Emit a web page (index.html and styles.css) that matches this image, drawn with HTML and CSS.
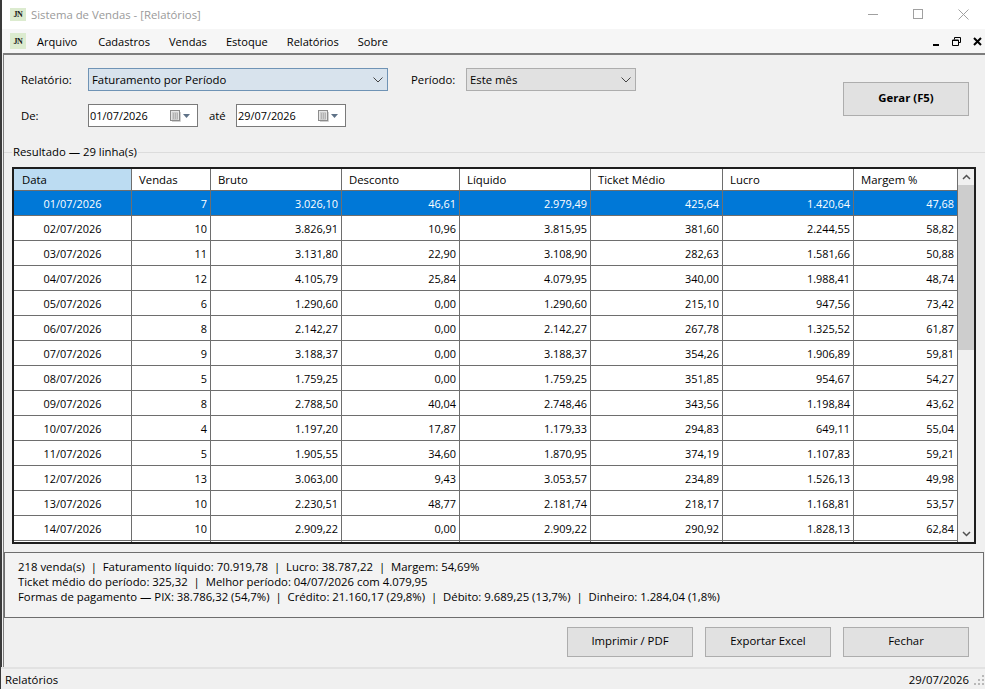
FILE: index.html
```html
<!DOCTYPE html>
<html lang="pt-BR">
<head>
<meta charset="utf-8">
<title>Sistema de Vendas - [Relatórios]</title>
<link rel="stylesheet" href="styles.css">
</head>
<body>
<div class="window">
  <header class="titlebar">
    <span class="appicon short"><span class="appicon-text">JN</span></span>
    <span class="title">Sistema de Vendas - [Relatórios]</span>
    <span class="caption">
      <svg class="cap" width="11" height="11" viewBox="0 0 11 11"><path d="M0 5.500h10" stroke="#a0a0a0" fill="none"/></svg>
      <svg class="cap" width="11" height="11" viewBox="0 0 11 11"><rect x=".5" y=".5" width="9" height="9" stroke="#a0a0a0" fill="none"/></svg>
      <svg class="cap" width="11" height="11" viewBox="0 0 11 11"><path d="M.5.500l10 10M10.500.500l-10 10" stroke="#a0a0a0" fill="none"/></svg>
    </span>
  </header>
  <nav class="menubar">
    <span class="appicon"><span class="appicon-text">JN</span></span>
    <span class="menu">Arquivo</span>
    <span class="menu">Cadastros</span>
    <span class="menu">Vendas</span>
    <span class="menu">Estoque</span>
    <span class="menu">Relatórios</span>
    <span class="menu">Sobre</span>
    <span class="mdi">
      <svg width="7" height="9" viewBox="0 0 7 9"><path d="M0 8h6" stroke="#000" stroke-width="2" fill="none"/></svg>
      <svg width="9" height="9" viewBox="0 0 9 9"><path d="M2.500 2.500V.5h6v5H6.500M.5 3h6v5.500h-6zM.5 3.500h6" stroke="#000" fill="none"/></svg>
      <svg width="9" height="9" viewBox="0 0 9 9"><path d="M1 1l7 7M8 1L1 8" stroke="#000" stroke-width="2" fill="none"/></svg>
    </span>
  </nav>
  <main class="child">
    <section class="filters">
      <div class="fields">
        <div class="field-row">
          <label class="label">Relatório:</label>
          <div class="select focus wide"><span>Faturamento por Período</span><svg class="chev" width="10" height="6" viewBox="0 0 10 6"><path d="M.5.500L5 5 9.500.500" stroke="#444" fill="none"/></svg></div>
          <label class="label period">Período:</label>
          <div class="select plain"><span>Este mês</span><svg class="chev" width="10" height="6" viewBox="0 0 10 6"><path d="M.5.500L5 5 9.500.500" stroke="#444" fill="none"/></svg></div>
        </div>
        <div class="field-row">
          <label class="label">De:</label>
          <div class="date"><span>01/07/2026</span><svg class="cal" width="20" height="12" viewBox="0 0 20 12"><rect x=".5" y=".5" width="9" height="10" fill="#e6e6e6" stroke="#8c8c8c"/><path d="M10.500 2v9.500H2" stroke="#d0d0d0" fill="none"/><path d="M2 3h6M2 5h6M2 7h6M2 9h6M3.500 3v6M5.500 3v6M7.500 3v6" stroke="#b4b4b4" fill="none"/><path d="M13 4h7l-3.500 4z" fill="#5f7287"/></svg></div>
          <span class="ate">até</span>
          <div class="date"><span>29/07/2026</span><svg class="cal" width="20" height="12" viewBox="0 0 20 12"><rect x=".5" y=".5" width="9" height="10" fill="#e6e6e6" stroke="#8c8c8c"/><path d="M10.500 2v9.500H2" stroke="#d0d0d0" fill="none"/><path d="M2 3h6M2 5h6M2 7h6M2 9h6M3.500 3v6M5.500 3v6M7.500 3v6" stroke="#b4b4b4" fill="none"/><path d="M13 4h7l-3.500 4z" fill="#5f7287"/></svg></div>
        </div>
      </div>
      <button class="btn gerar">Gerar (F5)</button>
    </section>
    <section class="group">
      <div class="legend"><span>Resultado — 29 linha(s)</span></div>
      <div class="grid-frame">
        <div class="grid-view">
          <table class="grid">
            <colgroup><col class="c1"><col class="c2"><col class="c3"><col class="c4"><col class="c5"><col class="c6"><col class="c7"><col class="c8"></colgroup>
            <thead><tr><th class="cur">Data</th><th>Vendas</th><th>Bruto</th><th>Desconto</th><th>Líquido</th><th>Ticket Médio</th><th>Lucro</th><th>Margem %</th></tr></thead>
            <tbody>
              <tr class="sel"><td class="ctr">01/07/2026</td><td>7</td><td>3.026,10</td><td>46,61</td><td>2.979,49</td><td>425,64</td><td>1.420,64</td><td>47,68</td></tr>
              <tr><td class="ctr">02/07/2026</td><td>10</td><td>3.826,91</td><td>10,96</td><td>3.815,95</td><td>381,60</td><td>2.244,55</td><td>58,82</td></tr>
              <tr><td class="ctr">03/07/2026</td><td>11</td><td>3.131,80</td><td>22,90</td><td>3.108,90</td><td>282,63</td><td>1.581,66</td><td>50,88</td></tr>
              <tr><td class="ctr">04/07/2026</td><td>12</td><td>4.105,79</td><td>25,84</td><td>4.079,95</td><td>340,00</td><td>1.988,41</td><td>48,74</td></tr>
              <tr><td class="ctr">05/07/2026</td><td>6</td><td>1.290,60</td><td>0,00</td><td>1.290,60</td><td>215,10</td><td>947,56</td><td>73,42</td></tr>
              <tr><td class="ctr">06/07/2026</td><td>8</td><td>2.142,27</td><td>0,00</td><td>2.142,27</td><td>267,78</td><td>1.325,52</td><td>61,87</td></tr>
              <tr><td class="ctr">07/07/2026</td><td>9</td><td>3.188,37</td><td>0,00</td><td>3.188,37</td><td>354,26</td><td>1.906,89</td><td>59,81</td></tr>
              <tr><td class="ctr">08/07/2026</td><td>5</td><td>1.759,25</td><td>0,00</td><td>1.759,25</td><td>351,85</td><td>954,67</td><td>54,27</td></tr>
              <tr><td class="ctr">09/07/2026</td><td>8</td><td>2.788,50</td><td>40,04</td><td>2.748,46</td><td>343,56</td><td>1.198,84</td><td>43,62</td></tr>
              <tr><td class="ctr">10/07/2026</td><td>4</td><td>1.197,20</td><td>17,87</td><td>1.179,33</td><td>294,83</td><td>649,11</td><td>55,04</td></tr>
              <tr><td class="ctr">11/07/2026</td><td>5</td><td>1.905,55</td><td>34,60</td><td>1.870,95</td><td>374,19</td><td>1.107,83</td><td>59,21</td></tr>
              <tr><td class="ctr">12/07/2026</td><td>13</td><td>3.063,00</td><td>9,43</td><td>3.053,57</td><td>234,89</td><td>1.526,13</td><td>49,98</td></tr>
              <tr><td class="ctr">13/07/2026</td><td>10</td><td>2.230,51</td><td>48,77</td><td>2.181,74</td><td>218,17</td><td>1.168,81</td><td>53,57</td></tr>
              <tr><td class="ctr">14/07/2026</td><td>10</td><td>2.909,22</td><td>0,00</td><td>2.909,22</td><td>290,92</td><td>1.828,13</td><td>62,84</td></tr>
              <tr><td></td><td></td><td></td><td></td><td></td><td></td><td></td><td></td></tr>
            </tbody>
          </table>
        </div>
        <div class="scrollbar">
          <svg class="arrow" width="9" height="6" viewBox="0 0 9 6"><path d="M1 5l3.500-3.500L8 5" stroke="#505050" stroke-width="1.500" fill="none"/></svg>
          <div class="track"><div class="thumb"></div></div>
          <svg class="arrow" width="9" height="6" viewBox="0 0 9 6"><path d="M1 1l3.500 3.500L8 1" stroke="#505050" stroke-width="1.500" fill="none"/></svg>
        </div>
      </div>
    </section>
    <section class="summary">
      <div>218 venda(s)&nbsp; |&nbsp; Faturamento líquido: 70.919,78&nbsp; |&nbsp; Lucro: 38.787,22&nbsp; |&nbsp; Margem: 54,69%</div>
      <div>Ticket médio do período: 325,32&nbsp; |&nbsp; Melhor período: 04/07/2026 com 4.079,95</div>
      <div>Formas de pagamento — PIX: 38.786,32 (54,7%)&nbsp; |&nbsp; Crédito: 21.160,17 (29,8%)&nbsp; |&nbsp; Débito: 9.689,25 (13,7%)&nbsp; |&nbsp; Dinheiro: 1.284,04 (1,8%)</div>
    </section>
    <section class="actions">
      <button class="btn">Imprimir / PDF</button>
      <button class="btn">Exportar Excel</button>
      <button class="btn">Fechar</button>
    </section>
  </main>
  <footer class="statusbar">
    <span>Relatórios</span>
    <span class="status-right">29/07/2026</span>
    <svg class="grip" width="12" height="12" viewBox="0 0 12 12"><path d="M9 2h2v2H9zM5 6h2v2H5zM9 6h2v2H9zM1 10h2v2H1zM5 10h2v2H5zM9 10h2v2H9z" fill="#b8b8b8"/></svg>
  </footer>
</div>
</body>
</html>
```
FILE: styles.css
```css
* { box-sizing: border-box; }
html, body { margin: 0; padding: 0; }
body {
  width: 985px;
  height: 689px;
  overflow: hidden;
  font-family: "Open Sans", "Noto Sans", sans-serif;
  font-size: 11.35px;
  color: #000;
  background: #f0f0f0;
}
.window {
  width: 985px;
  height: 689px;
  display: flex;
  flex-direction: column;
  border-left: 2px solid #3a3a3a;
}
.titlebar {
  height: 29px;
  flex: none;
  background: #fff;
  display: flex;
  align-items: center;
  padding-left: 8px;
}
.appicon {
  width: 16px;
  height: 16px;
  background: #dcebcf;
  display: inline-flex;
  align-items: center;
  justify-content: center;
  flex: none;
}
.appicon.short { height: 13px; }
.appicon-text {
  font-family: "Liberation Serif", serif;
  font-size: 8px;
  font-weight: bold;
  letter-spacing: -0.5px;
  color: #1a1a1a;
}
.title { margin-left: 5px; color: #9a9a9a; }
.caption {
  margin-left: auto;
  display: flex;
  gap: 34px;
  padding-right: 16px;
}
.cap { display: block; }
.menubar {
  height: 24px;
  flex: none;
  background: #f6f6f6;
  display: flex;
  align-items: center;
  padding-left: 8px;
  font-size: 11.1px;
}
.menu { margin-left: 19px; }
.menu:nth-child(2) { margin-left: 11px; }
.menu:nth-child(3) { margin-left: 21px; }
.mdi {
  margin-left: auto;
  display: flex;
  align-items: center;
  gap: 12px;
  padding-right: 3px;
}
.child {
  flex: 1;
  min-height: 0;
  margin-left: 1px;
  border-top: 2px solid #7d7d7d;
  border-left: 1px solid #7d7d7d;
  display: flex;
  flex-direction: column;
}
.filters {
  height: 89px;
  flex: none;
  display: flex;
  padding: 13px 16px 0 17px;
}
.fields { display: flex; flex-direction: column; gap: 13px; }
.field-row { display: flex; align-items: center; height: 23px; }
.label { width: 67px; flex: none; }
.label.period { width: 55px; margin-left: 23px; }
.select {
  height: 23px;
  display: flex;
  align-items: center;
  justify-content: space-between;
  padding: 0 4px 0 3px;
  border: 1px solid #adadad;
  background: #e1e1e1;
  width: 170px;
}
.select.wide { width: 300px; }
.select.focus { background: #d8e3ed; border-color: #6f93b5; }
.chev { display: block; }
.date {
  width: 110px;
  height: 23px;
  border: 1px solid #7a7a7a;
  background: #fff;
  display: flex;
  align-items: center;
  justify-content: space-between;
  padding: 0 7px 0 1px;
  font-size: 10.9px;
}
.ate { width: 38px; padding-left: 11px; flex: none; }
.btn {
  width: 126px;
  height: 30px;
  border: 1px solid #adadad;
  background: #e1e1e1;
  font: inherit;
  color: #000;
  padding: 0 0 3px;
}
.gerar {
  height: 34px;
  margin-left: auto;
  margin-top: 14px;
  font-weight: bold;
}
.group {
  flex: none;
  height: 408px;
  display: flex;
  flex-direction: column;
}
.legend {
  height: 23px;
  flex: none;
  padding-left: 8px;
  line-height: 15px;
  background: linear-gradient(#f0f0f0 8px, #dcdcdc 8px, #dcdcdc 9px, #f0f0f0 9px);
}
.legend span { background: #f0f0f0; padding: 0 1px; }
.grid-frame {
  margin-left: 8px;
  width: 964px;
  height: 377px;
  flex: none;
  border: 2px solid #1e1e1e;
  display: flex;
  background: #fff;
}
.grid-view { width: 944px; height: 373px; overflow: hidden; flex: none; }
.grid {
  border-collapse: separate;
  border-spacing: 0;
  table-layout: fixed;
  width: 944px;
}
.c1 { width: 118px; }
.c2 { width: 79px; }
.c3 { width: 131px; }
.c4 { width: 118px; }
.c5 { width: 131px; }
.c6 { width: 132px; }
.c7 { width: 131px; }
.c8 { width: 104px; }
.grid th {
  height: 22px;
  font-weight: normal;
  text-align: left;
  padding: 0 7px;
  background: #fff;
  border-right: 1px solid #6e6e6e;
  border-bottom: 1px solid #6e6e6e;
}
.grid th.cur { background: #bcdcf2; padding-left: 8px; }
.grid td {
  height: 25px;
  text-align: right;
  padding: 0 3px;
  font-size: 10.9px;
  border-right: 1px solid #6e6e6e;
  border-bottom: 1px solid #6e6e6e;
  white-space: nowrap;
}
.grid td.ctr { text-align: center; }
.grid .sel td { background: #0078d7; color: #fff; }
.scrollbar {
  width: 16px;
  background: #f0f0f0;
  display: flex;
  flex-direction: column;
  align-items: center;
}
.arrow { flex: none; margin: 5px 0; display: block; }
.track { flex: 1; width: 100%; }
.thumb { height: 165px; background: #cdcdcd; }
.summary {
  flex: none;
  height: 66px;
  margin-right: 1px;
  border: 1px solid #6e6e6e;
  background: #f3f3f3;
  padding: 6px 13px;
  line-height: 15px;
}
.actions {
  height: 50px;
  flex: none;
  display: flex;
  justify-content: flex-end;
  gap: 12px;
  padding: 9px 16px 0 0;
}
.statusbar {
  flex: none;
  height: 22px;
  margin-left: -1px;
  border-top: 2px solid #e2e2e2;
  background: #f0f0f0;
  display: flex;
  align-items: center;
  padding-left: 4px;
}
.status-right { margin-left: auto; margin-right: 4px; }
.grip { display: block; flex: none; }
```
